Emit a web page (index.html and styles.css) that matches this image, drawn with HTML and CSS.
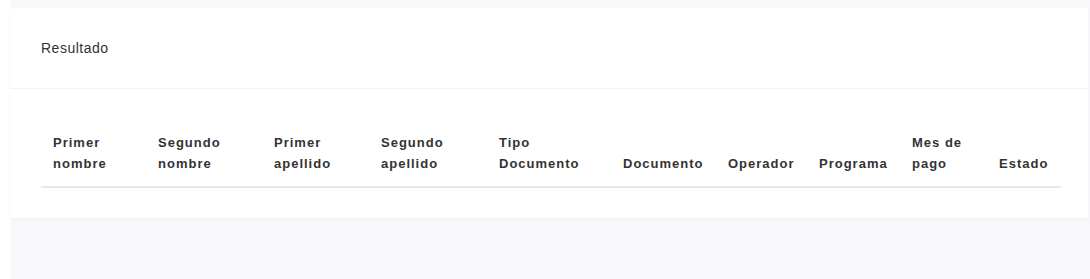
FILE: index.html
```html
<!DOCTYPE html>
<html lang="es">
<head>
<meta charset="utf-8">
<title>Resultado</title>
<link rel="stylesheet" href="styles.css">
</head>
<body>
<div class="page">
  <div class="card">
    <div class="card-header">Resultado</div>
    <div class="card-body">
      <table class="results">
        <colgroup>
          <col class="c1"><col class="c2"><col class="c3"><col class="c4"><col class="c5">
          <col class="c6"><col class="c7"><col class="c8"><col class="c9"><col class="c10">
        </colgroup>
        <thead>
          <tr>
            <th>Primer<br>nombre</th>
            <th>Segundo<br>nombre</th>
            <th>Primer<br>apellido</th>
            <th>Segundo<br>apellido</th>
            <th>Tipo<br>Documento</th>
            <th>Documento</th>
            <th>Operador</th>
            <th>Programa</th>
            <th>Mes de<br>pago</th>
            <th>Estado</th>
          </tr>
        </thead>
      </table>
    </div>
  </div>
</div>
</body>
</html>
```
FILE: styles.css
```css
html, body {
  margin: 0;
  padding: 0;
  background: #ffffff;
  font-family: "Liberation Sans", Arial, sans-serif;
  overflow: hidden;
}
.page {
  margin-left: 10px;
  padding-top: 8px;
  background: #f8f8fa;
  height: 271px;
}
.card {
  width: 1078px;
  background: #ffffff;
  box-shadow: 0 1px 3px rgba(0, 0, 0, 0.03);
}
.card-header {
  height: 81px;
  box-sizing: border-box;
  padding: 0 31px;
  display: flex;
  align-items: center;
  font-size: 14px;
  letter-spacing: 0.5px;
  color: #333333;
  border-bottom: 1px solid #f3f3f5;
}
.card-body {
  padding: 31px 27px 30px 31px;
}
.results {
  width: 1020px;
  border-collapse: collapse;
  table-layout: fixed;
}
.results th {
  text-align: left;
  vertical-align: bottom;
  font-size: 13px;
  font-weight: bold;
  letter-spacing: 1px;
  line-height: 21px;
  color: #333333;
  padding: 12px 0 12px 12px;
  border-bottom: 2px solid #e8e8ec;
  white-space: nowrap;
}
.c1 { width: 105px; }
.c2 { width: 116px; }
.c3 { width: 107px; }
.c4 { width: 118px; }
.c5 { width: 124px; }
.c6 { width: 105px; }
.c7 { width: 91px; }
.c8 { width: 93px; }
.c9 { width: 87px; }
.c10 { width: 74px; }
```
